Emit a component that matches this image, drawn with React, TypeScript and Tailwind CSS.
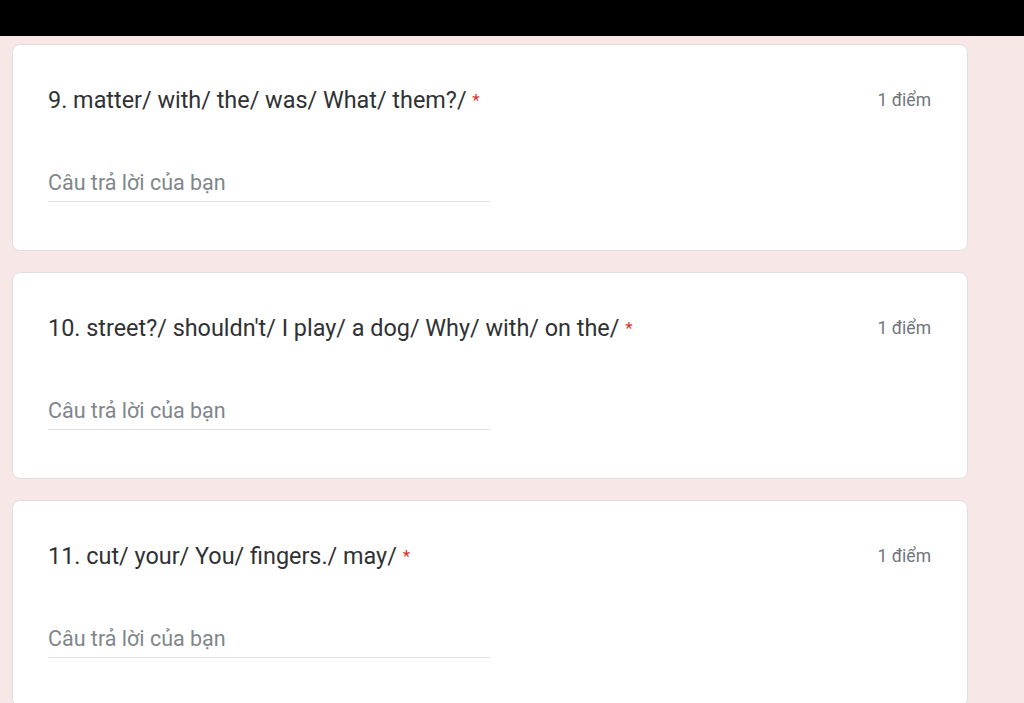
const questions = [
  "9. matter/ with/ the/ was/ What/ them?/",
  "10. street?/ shouldn't/ I play/ a dog/ Why/ with/ on the/",
  "11. cut/ your/ You/ fingers./ may/",
]

const QuestionCard: React.FC<{ title: string }> = ({ title }) => {
  return (
    <div className="h-[207px] w-[956px] shrink-0 rounded-lg border border-[#e3dede] bg-white pl-[35px] pr-[36px] pt-[41px]">
      <div className="flex items-center justify-between">
        <p className="text-[23.4px] leading-[28px] text-[#303134]">
          {title} <span className="align-top text-[17px] text-[#d93025]">*</span>
        </p>
        <p className="text-[17.5px] leading-[28px] text-[#70757a]">1 điểm</p>
      </div>
      <div className="mt-[56px] w-[442px] border-b border-[#e0e0e0] pb-[5px]">
        <p className="text-[21.5px] leading-[26px] text-[#80868b]">Câu trả lời của bạn</p>
      </div>
    </div>
  )
}

export default function App() {
  return (
    <div className="h-[703px] w-[1024px] overflow-hidden bg-[#f8e7e7] font-['Roboto',sans-serif]">
      <div className="h-9 bg-black" />
      <div className="flex flex-col gap-[21px] pl-3 pt-2">
        {questions.map((q, i) => (
          <QuestionCard key={i} title={q} />
        ))}
      </div>
    </div>
  )
}
